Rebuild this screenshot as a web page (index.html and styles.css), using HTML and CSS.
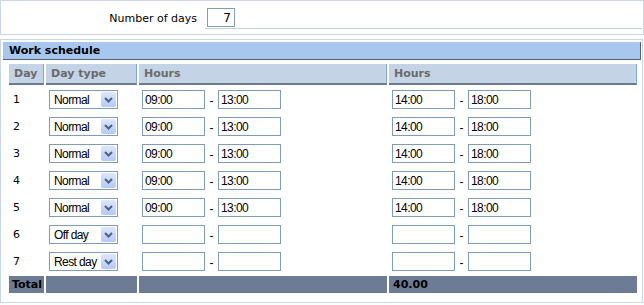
FILE: index.html
```html
<!DOCTYPE html>
<html lang="en">
<head>
<meta charset="UTF-8" />
<title>Work schedule</title>
<link rel="stylesheet" href="styles.css">
</head>
<body>

<div class="days-panel">
  <label class="days-label" for="numDays">Number of days</label>
  <div class="days-field"><input class="days-input" id="numDays" type="text" value="7" /></div>
</div>

<div class="schedule-panel">
  <div class="schedule-title">Work schedule</div>
  <table class="schedule">
    <colgroup>
      <col class="col-day" />
      <col class="col-type" />
      <col class="col-hours" />
      <col class="col-hours" />
    </colgroup>
    <thead>
      <tr><th>Day</th><th>Day type</th><th>Hours</th><th>Hours</th></tr>
    </thead>
    <tbody id="rows"></tbody>
    <tfoot>
      <tr><td>Total</td><td></td><td></td><td class="total-value">40.00</td></tr>
    </tfoot>
  </table>
</div>

<script>
  const days = [
    { type: 'Normal', am: ['09:00', '13:00'], pm: ['14:00', '18:00'] },
    { type: 'Normal', am: ['09:00', '13:00'], pm: ['14:00', '18:00'] },
    { type: 'Normal', am: ['09:00', '13:00'], pm: ['14:00', '18:00'] },
    { type: 'Normal', am: ['09:00', '13:00'], pm: ['14:00', '18:00'] },
    { type: 'Normal', am: ['09:00', '13:00'], pm: ['14:00', '18:00'] },
    { type: 'Off day', am: ['', ''], pm: ['', ''] },
    { type: 'Rest day', am: ['', ''], pm: ['', ''] }
  ];

  function range(pair) {
    return '<div class="range">' +
      '<input class="time" type="text" value="' + pair[0] + '" />' +
      '<span class="dash">-</span>' +
      '<input class="time" type="text" value="' + pair[1] + '" />' +
      '</div>';
  }

  const arrow = '<span class="select-btn"><svg width="9" height="6" viewBox="0 0 9 6">' +
    '<path d="M1 1 L4.5 4.5 L8 1" fill="none" stroke="#4d6185" stroke-width="2"/></svg></span>';

  document.getElementById('rows').innerHTML = days.map((d, i) =>
    '<tr>' +
      '<td class="day-num">' + (i + 1) + '</td>' +
      '<td class="day-type"><div class="select"><span class="select-text">' + d.type + '</span>' + arrow + '</div></td>' +
      '<td class="hours">' + range(d.am) + '</td>' +
      '<td class="hours">' + range(d.pm) + '</td>' +
    '</tr>'
  ).join('');
</script>

</body>
</html>
```

FILE: styles.css
```css
body {
  margin: 0;
  background: #fff;
  font-family: "DejaVu Sans", Verdana, sans-serif;
  font-size: 11px;
  color: #000;
}
.days-panel {
  width: 644px;
  height: 35px;
  box-sizing: border-box;
  border: 1px solid #c8d6e5;
  display: flex;
  align-items: flex-start;
}
.days-label {
  width: 196px;
  text-align: right;
  margin-top: 11px;
}
.days-field {
  flex: 1;
  margin: 7px 1px 0 8px;
  height: 20px;
  padding-left: 2px;
  border-bottom: 1px solid #c4d4cc;
}
.days-input {
  width: 28px;
  height: 19px;
  box-sizing: border-box;
  border: 1px solid #7f9db9;
  padding: 0 3px 0 0;
  text-align: right;
  font-family: "DejaVu Sans", sans-serif;
  font-size: 12px;
}
.schedule-panel {
  width: 643px;
  height: 264px;
  margin-top: 4px;
  box-sizing: border-box;
  border: 1px solid #c8d6e5;
  padding: 2px 1px 0 2px;
}
.schedule-title {
  height: 17px;
  line-height: 17px;
  padding-left: 6px;
  background: #a7c7ee;
  border-bottom: 1px solid #58606c;
  border-right: 1px solid #58606c;
  font-weight: bold;
}
.schedule {
  margin: 2px 0 0 4px;
  width: 632px;
  table-layout: fixed;
  border-collapse: separate;
  border-spacing: 2px;
}
.col-day { width: 35px; }
.col-type { width: 91px; }
.col-hours { width: 248px; }
.schedule th, .schedule td {
  box-sizing: border-box;
  padding: 0;
}
.schedule th {
  height: 21px;
  padding-left: 5px;
  text-align: left;
  background: #c4d3e5;
  border-right: 1px solid #84a8d4;
  border-bottom: 2px solid #6a7a92;
  color: #6b6b6b;
  font-weight: bold;
}
.schedule tbody td {
  height: 25px;
  vertical-align: middle;
}
.day-num {
  padding-left: 4px !important;
}
.day-type, .hours {
  padding-left: 3px !important;
}
.select {
  width: 69px;
  height: 19px;
  box-sizing: border-box;
  border: 1px solid #7f9db9;
  background: #fff;
  display: flex;
  align-items: center;
}
.select-text {
  flex: 1;
  padding-left: 4px;
  font-family: "Liberation Sans", Arial, sans-serif;
  font-size: 12px;
  letter-spacing: -0.6px;
  white-space: nowrap;
}
.select-btn {
  width: 15px;
  height: 15px;
  margin-right: 1px;
  border-radius: 2px;
  background: linear-gradient(#dde7fd, #b5c8f6);
  display: flex;
  align-items: center;
  justify-content: center;
}
.range {
  display: flex;
  align-items: center;
}
.time {
  width: 63px;
  height: 19px;
  box-sizing: border-box;
  border: 1px solid #7f9db9;
  padding: 0 0 0 2px;
  margin: 0;
  font-family: "Liberation Sans", Arial, sans-serif;
  font-size: 12px;
  letter-spacing: -0.6px;
}
.dash {
  width: 13px;
  text-align: center;
  padding-top: 2px;
  font-family: "Liberation Sans", Arial, sans-serif;
  font-size: 12px;
}
.schedule tfoot td {
  height: 17px;
  padding-left: 3px;
  background: #6e7b95;
  font-weight: bold;
  color: #000;
}
.schedule tfoot .total-value {
  padding-left: 4px;
}
```
